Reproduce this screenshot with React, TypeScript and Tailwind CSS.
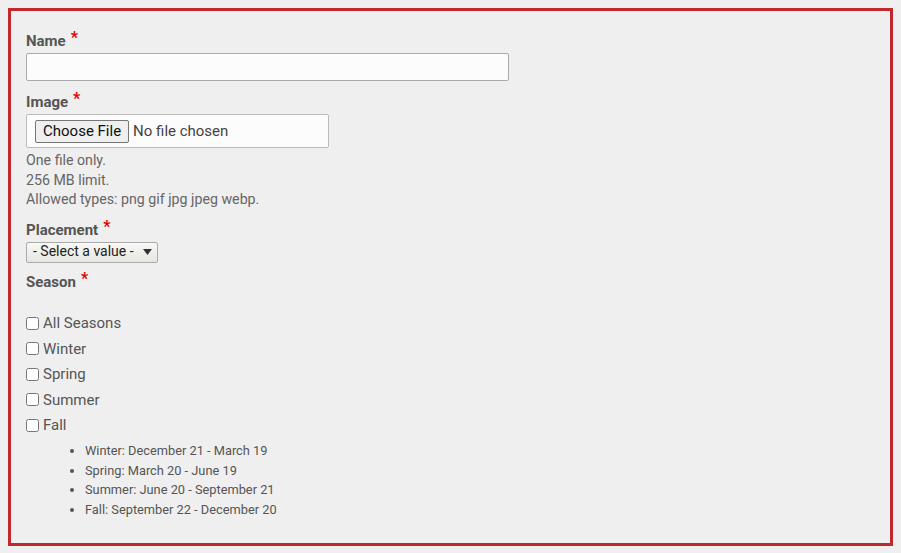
import { useState } from "react";

const seasons = ["All Seasons", "Winter", "Spring", "Summer", "Fall"];

const ranges = [
  "Winter: December 21 - March 19",
  "Spring: March 20 - June 19",
  "Summer: June 20 - September 21",
  "Fall: September 22 - December 20",
];

function Label({ children }: { children: React.ReactNode }) {
  return (
    <label className="block text-[15px] font-bold leading-[20px] text-[#555]">
      {children}
      <span className="relative -top-[3px] ml-[5px] text-[16px] text-[#e00000]">*</span>
    </label>
  );
}

export default function App() {
  const [name, setName] = useState("");
  const [checked, setChecked] = useState<Record<string, boolean>>({});

  return (
    <div className="min-h-[553px] bg-[#efefef] p-2 font-['Roboto',sans-serif]">
      <form className="h-[538px] border-[3px] border-[#c1272d] px-[15px] pt-[20px]">
        <Label>Name</Label>
        <input
          type="text"
          value={name}
          onChange={(e) => setName(e.target.value)}
          className="mt-[2px] block h-[28px] w-[483px] rounded-[2px] border border-[#aaa] bg-[#fcfcfc] px-2 text-[14px] outline-none"
        />

        <div className="mt-[11px]">
          <Label>Image</Label>
          <div className="mt-[2px] flex h-[34px] w-[303px] items-center rounded-[2px] border border-[#bbb] bg-[#fcfcfc] pl-[8px]">
            <span className="flex h-[23px] items-center rounded-[2px] border border-[#767676] bg-[#efefef] px-[7px] text-[15px] text-[#111]">
              Choose File
            </span>
            <span className="ml-[4px] text-[15px] text-[#444]">No file chosen</span>
          </div>
          <div className="mt-[3px] text-[14.2px] leading-[19.5px] text-[#666]">
            <p>One file only.</p>
            <p>256 MB limit.</p>
            <p>Allowed types: png gif jpg jpeg webp.</p>
          </div>
        </div>

        <div className="mt-[10px]">
          <Label>Placement</Label>
          <div className="mt-[2px] flex h-[21px] w-[132px] items-center justify-between rounded-[2px] border border-[#aaa] bg-gradient-to-b from-[#f8f8f4] to-[#e6e6e2] pr-[5px] pl-[6px] text-[14px] text-[#222]">
            <span className="-mt-px">- Select a value -</span>
            <svg width="9" height="6" viewBox="0 0 9 6">
              <path d="M0 0h9L4.5 6z" fill="#333" />
            </svg>
          </div>
        </div>

        <div className="mt-[9px]">
          <Label>Season</Label>
          <div className="mt-[22px] flex flex-col gap-[6px]">
            {seasons.map((s) => (
              <label key={s} className="flex h-[19.5px] items-center text-[15px] text-[#555]">
                <input
                  type="checkbox"
                  checked={!!checked[s]}
                  onChange={(e) => setChecked({ ...checked, [s]: e.target.checked })}
                  className="m-0 h-[13px] w-[13px]"
                />
                <span className="ml-[4px]">{s}</span>
              </label>
            ))}
          </div>
          <ul className="mt-[6px] list-disc pl-[59px] text-[12.8px] leading-[19.5px] text-[#555]">
            {ranges.map((r) => (
              <li key={r}>{r}</li>
            ))}
          </ul>
        </div>
      </form>
    </div>
  );
}
